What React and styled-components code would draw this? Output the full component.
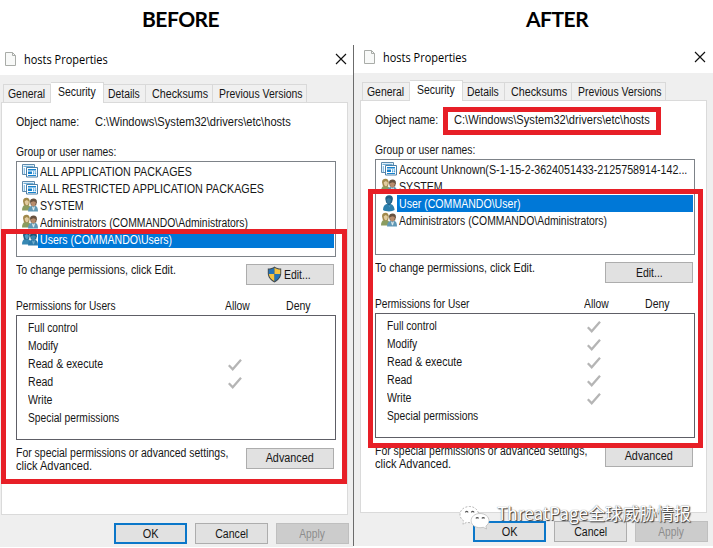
import React from "react";
import styled, { createGlobalStyle, css } from "styled-components";

const Global = createGlobalStyle`
  * { box-sizing: border-box; }
  body { margin: 0; background: #fff; overflow: hidden; }
`;

const Page = styled.main`
  position: relative;
  width: 713px;
  height: 548px;
  overflow: hidden;
  background: #fff;
  color: #161616;
  font-family: "Liberation Sans", Arial, sans-serif;
  font-size: 12px;
  line-height: 14px;
`;

const T = styled.span`
  display: block;
  width: max-content;
  white-space: pre;
  transform: scaleX(${(p) => p.$sx ?? 0.88});
  transform-origin: ${(p) => (p.$center ? "center" : "left")};
`;

const Headings = styled.header`
  display: grid;
  grid-template-columns: 362px 1fr;
  height: 43px;
`;

const Heading = styled.h1`
  margin: 0;
  padding-top: 6px;
  padding-left: ${(p) => p.$indent}px;
  color: #000;
  font: 700 21px/26px Lato, sans-serif;
  letter-spacing: ${(p) => p.$ls}px;
`;

const Columns = styled.div`
  display: grid;
  grid-template-columns: 353px 360px;
  align-items: start;
`;

const Dialog = styled.section`
  height: ${(p) => (p.$second ? 503 : 502)}px;
  margin-top: ${(p) => (p.$second ? 0 : 2)}px;
  padding-left: ${(p) => (p.$second ? 6 : 0)}px;
  background: linear-gradient(#fff 30px, #efefef 30px);
  ${(p) =>
    p.$second &&
    css`
      background: linear-gradient(#6b6b6b, #6b6b6b) 0 2px / 1px 100% no-repeat,
        linear-gradient(#fff 30px, #efefef 30px);
    `}
`;

const TitleBar = styled.div`
  display: flex;
  height: 37px;
  width: 347px;
  padding: 7px 0 0 5px;
  align-items: flex-start;
`;

const Title = styled.div`
  margin-left: 8px;
  flex: 1;
  color: #000;
  font: 12px/16px "Open Sans", sans-serif;
`;

const Tabs = styled.nav`
  display: flex;
  align-items: flex-end;
  height: 20px;
  padding-left: 3px;
`;

const Tab = styled.div`
  flex: none;
  width: ${(p) => p.$w}px;
  height: 18px;
  padding: 2px 0 0 ${(p) => p.$pad}px;
  border: 1px solid #d9d9d9;
  border-bottom: 0;
  border-left-width: ${(p) => (p.$first ? 1 : 0)}px;
  background: #f0f0f0;
  ${(p) =>
    p.$active &&
    css`
      height: 21px;
      margin-bottom: -1px;
      background: #fff;
      z-index: 1;
    `}
`;

const Pane = styled.div`
  width: 347px;
  height: 413px;
  margin-left: 1px;
  padding: 12px 11px 0 14px;
  border: 1px solid #dadada;
  background: #fff;
`;

const ObjectRow = styled.div`
  display: grid;
  grid-template-columns: 78.5px 1fr;
`;

const GroupLabel = styled.div`
  margin: 16px 0 2px 0;
`;

const UserList = styled.div`
  width: 320px;
  height: 96px;
  padding: 1px;
  border: 1px solid #7d8288;
`;

const UserRow = styled.div`
  display: flex;
  height: 17px;
  padding-left: 4px;
  svg { flex: none; }
`;

const UserName = styled.div`
  flex: 1;
  min-width: 0;
  margin-left: ${(p) => (p.$selected ? 0 : 1)}px;
  padding-left: ${(p) => (p.$selected ? 2 : 1)}px;
  line-height: 18px;
  color: ${(p) => (p.$selected ? "#fff" : "inherit")};
  background: ${(p) => (p.$selected ? "#0078d7" : "transparent")};
`;

const SplitRow = styled.div`
  display: flex;
  justify-content: space-between;
  align-items: flex-start;
  width: 318px;
`;

const ChangeRow = styled(SplitRow)`
  margin-top: 7px;
  height: 21px;
  & > span { margin-top: -1px; }
`;

const SpecialRow = styled(SplitRow)`
  margin-top: 8px;
  line-height: 13px;
  & > div { width: 220px; margin-top: -1px; }
`;

const Button = styled.button`
  flex: none;
  display: flex;
  align-items: center;
  justify-content: center;
  width: ${(p) => p.$w ?? 88}px;
  height: 21px;
  padding: 0;
  border: 1px solid #adadad;
  background: #e1e1e1;
  color: inherit;
  font: inherit;
  ${(p) => p.$primary && css`border: 2px solid #0b77c9;`}
  ${(p) => p.$disabled && css`background: #ccc; border-color: #bfbfbf; color: #8c8c8c;`}
`;

const PermHead = styled.div`
  display: grid;
  grid-template-columns: 209px 61px 1fr;
  margin-top: 14px;
  height: 16px;
`;

const PermBox = styled.div`
  width: 320px;
  height: 125px;
  padding: 3px 0 0 11px;
  border: 1px solid #5e5e66;
`;

const PermRow = styled.div`
  display: grid;
  grid-template-columns: 200px 1fr;
  height: 18px;
  line-height: 18px;
`;

const Footer = styled.footer`
  display: flex;
  gap: 8px;
  padding: 8px 0 0 114px;
`;

const RedFrame = styled.div`
  position: absolute;
  left: ${(p) => p.$x}px;
  top: ${(p) => p.$y}px;
  width: ${(p) => p.$w}px;
  height: ${(p) => p.$h}px;
  border: 5px solid #e71f27;
`;

const Watermark = styled.div`
  position: absolute;
  left: 459px;
  top: 500px;
  display: flex;
  color: #fff;
  font: 17px/26px "Noto Sans CJK SC", sans-serif;
  white-space: nowrap;
  text-shadow: 1px 1px 1px #333, 0 0 1px #666;
  svg { margin: 5px 6px 0 0; }
`;

const FileIcon = () => (
  <svg width="11" height="14" viewBox="0 0 11 14">
    <path d="M.5.5h7l3 3v10H.5z" fill="#f8f9f8" stroke="#a9aca8" />
    <path d="M7.500.5v3h3" fill="none" stroke="#a9aca8" />
  </svg>
);

const CloseIcon = () => (
  <svg width="12" height="12" viewBox="0 0 12 12">
    <path d="M1 1l10 10M11 1l-10 10" stroke="#111" strokeWidth="1.15" />
  </svg>
);

const PackageIcon = () => (
  <svg width="16" height="17" viewBox="0 0 16 17">
    <path d="M.5 1.500h12v10H.5z" fill="#fff" stroke="#5e8bad" />
    <path d="M1.500 2.800h10v1H1.500z" fill="#4a9bd0" />
    <path d="M1.700 5.500H3v1H1.700zM1.700 7.500H3v1H1.700zM1.700 9.500H3v1H1.700z" fill="#1782cd" />
    <path d="M4.500 4.500h11v9.500h-11z" fill="#fff" stroke="#4d7fa6" />
    <path d="M6 6h8v1.500H6z" fill="#1782cd" />
    <path d="M6 8.500h4v2.500H6zM11 8.500h1.300v1H11zM13 8.500h1.200v1H13zM11 10.200h1.300v1H11zM13 10.200h1.200v1H13zM6 12h8v1H6z" fill="#1782cd" />
  </svg>
);

const GroupIcon = ({ blue }) => (
  <svg width="16" height="17" viewBox="0 0 16 17">
    <path d="M0 13.500c0-3.500 1-5 3-5.500h3c2 .6 3 2.500 3 5.500z" fill={blue ? "#3788b3" : "#8b9c60"} />
    <path d="M1 4.200C1.100 1.700 2.700.7 4.600.8c2.200.1 3.300 1.600 3.200 4L7 8.600H2z" fill={blue ? "#205d82" : "#a1894c"} />
    <path d="M2.700 4.200l2.200-1.200 1.900 1.500c0 2-.8 3.800-2 3.800S2.800 6.400 2.700 4.200z" fill={blue ? "#539ac0" : "#e2cca0"} />
    <path d="M6 14.500c0-3.500 1.500-5 3.700-5.700h3.600c1.800.7 2.700 2.200 2.700 5.700z" fill={blue ? "#2c7bab" : "#6098b5"} />
    <path d="M8 4.800c0-2 1.400-3.200 3.600-3.200s3.500 1.200 3.300 3.600l-.8 3.200-5.200.2z" fill={blue ? "#1c5376" : "#66513f"} />
    <path d="M8.900 5.200l2.400-1 2.500.8c0 2.700-1 4.500-2.400 4.500S9 8 8.900 5.200z" fill={blue ? "#3e86ad" : "#b88c6c"} />
    <path d="M9.800 9.300l1.600 1.300 1.700-1.300-1.100 4h-1z" fill={blue ? "#73aecc" : "#dce8eb"} />
  </svg>
);

const PersonIcon = () => (
  <svg width="16" height="17" viewBox="0 0 16 17">
    <path d="M2 15c.1-3.500 1.300-5.600 3.700-6.100h4c2.500.6 3.800 3 3.900 6.200-2.800 1.800-8.700 1.800-11.600-.1z" fill="#2c7fac" />
    <path d="M4.300 4C4.300 1.500 6 .2 8.300.3c2.400.1 3.700 1.500 3.600 3.800L11 7.500l-3 3-2.900-3z" fill="#205f85" />
    <path d="M5.400 4.200l2.200-1.300L10 4c0 2.700-.8 4.800-2.200 4.800S5.500 6.700 5.400 4.200z" fill="#34789f" />
    <path d="M6.500 9.500l1.600 1.500 1.400-1.500-.7 3z" fill="#4f97bf" />
  </svg>
);

const ShieldIcon = () => (
  <svg width="15" height="17" viewBox="0 0 15 17">
    <path d="M7.500.5C5.600 2 3.500 2.600.8 2.600v4.700c0 4 2.700 7.200 6.700 9.200 4-2 6.700-5.200 6.700-9.200V2.600C11.500 2.600 9.400 2 7.500.5z" fill="#424b50" />
    <path d="M7.500 1.700C5.800 2.900 4 3.500 1.700 3.600v4.500h5.800z" fill="#2473b6" />
    <path d="M7.500 1.700c1.700 1.200 3.500 1.800 5.800 1.900v4.500H7.500z" fill="#f4c342" />
    <path d="M1.800 8.100h5.700v7.200c-3.200-1.700-5.200-4-5.700-7.200z" fill="#f4c342" />
    <path d="M13.200 8.100H7.500v7.200c3.200-1.700 5.200-4 5.700-7.200z" fill="#2473b6" />
  </svg>
);

const CheckIcon = () => (
  <svg width="15" height="18" viewBox="0 0 15 18">
    <path d="M.8 10.200l3.900 4L13 4.700" fill="none" stroke="#b5b5b5" strokeWidth="2.300" />
  </svg>
);

const ChatLogo = () => (
  <svg width="32" height="25" viewBox="0 0 32 25">
    <path d="M19.500 8C18 3.800 14.700 1.500 10.500 1.500 5.200 1.500 1 5 1 9.500c0 2.700 1.400 4.900 3.600 6.300L4 19.300l3.600-2c1.600.4 3.400.5 4.500.2" fill="#fff" stroke="#999" strokeWidth=".7" strokeDasharray="2 1.500" />
    <path d="M21 8.500c5.100 0 9 3.200 9 7.200 0 2.200-1.200 4-3.100 5.400l.6 2.900-3.200-1.700c-6.100 1.600-12.200-1.500-12.200-6.600 0-4 3.800-7.200 8.900-7.200z" fill="#fff" stroke="#aaa" strokeWidth=".6" />
    <path d="M17 13.500a1.300 1.300 0 0 1 2.500 0M23 13.500a1.300 1.300 0 0 1 2.500 0M6.500 7.500a1.200 1.200 0 0 1 2.400 0M12.500 7.500a1.200 1.200 0 0 1 2.400 0" fill="none" stroke="#555" strokeWidth="1.200" />
  </svg>
);

const icons = {
  package: <PackageIcon />,
  group: <GroupIcon />,
  groupBlue: <GroupIcon blue />,
  person: <PersonIcon />,
};

const CloseBox = styled.span`
  display: flex;
  margin-top: 1px;
`;

const TABS = [
  ["General", 48, 4, 0.87],
  ["Security", 53, 7, 0.87],
  ["Details", 42, 4, 0.865],
  ["Checksums", 67, 5.5, 0.895],
  ["Previous Versions", 94, 5.5, 0.87],
];

const PERMS = [
  ["Full control", 0.85],
  ["Modify", 0.855],
  ["Read & execute", 0.88],
  ["Read", 0.88],
  ["Write", 0.88],
  ["Special permissions", 0.855],
];

function PropertiesDialog({ second, users, subject, allowed, shield }) {
  return (
    <Dialog $second={second}>
      <TitleBar>
        <FileIcon />
        <Title><T $sx={0.915}>hosts Properties</T></Title>
        <CloseBox><CloseIcon /></CloseBox>
      </TitleBar>
      <Tabs>
        {TABS.map(([name, w, pad, sx], i) => (
          <Tab key={name} $w={w} $pad={pad} $first={i === 0} $active={i === 1}>
            <T $sx={sx}>{name}</T>
          </Tab>
        ))}
      </Tabs>
      <Pane>
        <ObjectRow>
          <T $sx={0.885}>Object name:</T>
          <T $sx={0.926}>{"C:\\Windows\\System32\\drivers\\etc\\hosts"}</T>
        </ObjectRow>
        <GroupLabel><T $sx={0.86}>Group or user names:</T></GroupLabel>
        <UserList>
          {users.map(([icon, name, sx, selected]) => (
            <UserRow key={name}>
              {icons[icon]}
              <UserName $selected={selected}><T $sx={sx}>{name}</T></UserName>
            </UserRow>
          ))}
        </UserList>
        <ChangeRow>
          <T $sx={0.888}>To change permissions, click Edit.</T>
          <Button>{shield && <ShieldIcon />}<T $center $sx={0.87}>Edit...</T></Button>
        </ChangeRow>
        <PermHead>
          <T $sx={0.848}>Permissions for {subject}</T>
          <T $sx={0.86}>Allow</T>
          <T $sx={0.88}>Deny</T>
        </PermHead>
        <PermBox>
          {PERMS.map(([name, sx]) => (
            <PermRow key={name}>
              <T $sx={sx}>{name}</T>
              {allowed.includes(name) && <CheckIcon />}
            </PermRow>
          ))}
        </PermBox>
        <SpecialRow>
          <div>
            <T $sx={0.872}>For special permissions or advanced settings,</T>
            <T $sx={0.92}>click Advanced.</T>
          </div>
          <Button><T $center $sx={0.9}>Advanced</T></Button>
        </SpecialRow>
      </Pane>
      <Footer>
        <Button $w={73} $primary><T $center $sx={0.91}>OK</T></Button>
        <Button $w={73}><T $center $sx={0.88}>Cancel</T></Button>
        <Button $w={73} $disabled><T $center $sx={0.85}>Apply</T></Button>
      </Footer>
    </Dialog>
  );
}

export default function App() {
  return (
    <>
      <Global />
      <Page>
        <Headings>
          <Heading $indent={142} $ls={-0.5}>BEFORE</Heading>
          <Heading $indent={164} $ls={-0.5}>AFTER</Heading>
        </Headings>
        <Columns>
          <PropertiesDialog
            shield
            subject="Users"
            allowed={["Read & execute", "Read"]}
            users={[
              ["package", "ALL APPLICATION PACKAGES", 0.89],
              ["package", "ALL RESTRICTED APPLICATION PACKAGES", 0.894],
              ["group", "SYSTEM", 0.885],
              ["group", "Administrators (COMMANDO\\Administrators)", 0.864],
              ["groupBlue", "Users (COMMANDO\\Users)", 0.88, true],
            ]}
          />
          <PropertiesDialog
            second
            subject="User"
            allowed={["Full control", "Modify", "Read & execute", "Read", "Write"]}
            users={[
              ["package", "Account Unknown(S-1-15-2-3624051433-2125758914-142...", 0.893],
              ["group", "SYSTEM", 0.885],
              ["person", "User (COMMANDO\\User)", 0.88, true],
              ["group", "Administrators (COMMANDO\\Administrators)", 0.864],
            ]}
          />
        </Columns>
        <RedFrame $x={1} $y={229} $w={346} $h={255} />
        <RedFrame $x={368} $y={189} $w={335} $h={259} />
        <RedFrame $x={443} $y={107} $w={218} $h={28} />
        <Watermark><ChatLogo /><T $sx={1.01}>ThreatPage全球威胁情报</T></Watermark>
      </Page>
    </>
  );
}
